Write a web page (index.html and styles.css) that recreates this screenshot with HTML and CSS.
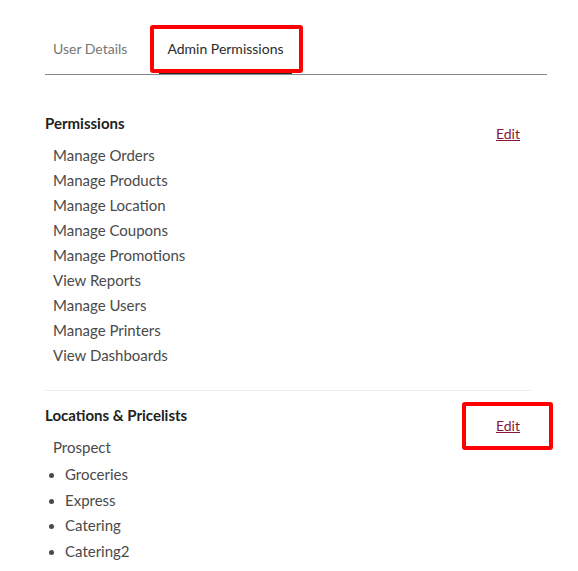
FILE: index.html
```html
<!DOCTYPE html>
<html lang="en">
<head>
  <meta charset="UTF-8" />
  <meta name="viewport" content="width=device-width, initial-scale=1.0"/>
  <title>Admin Permissions</title>
  <link rel="stylesheet" href="styles.css">
</head>
<body>

  <div class="page">
    <div class="tabs">
      <div class="tab">User Details</div>
      <div class="tab tab-active">
        <span class="mark mark-tab"></span>
        Admin Permissions
      </div>
    </div>

    <div class="section">
      <div class="section-body">
        <h3 class="section-title">Permissions</h3>
        <ul class="plain-list">
          <li>Manage Orders</li>
          <li>Manage Products</li>
          <li>Manage Location</li>
          <li>Manage Coupons</li>
          <li>Manage Promotions</li>
          <li>View Reports</li>
          <li>Manage Users</li>
          <li>Manage Printers</li>
          <li>View Dashboards</li>
        </ul>
      </div>
      <div class="edit-wrap">
        <a href="#" class="edit-link">Edit</a>
      </div>
    </div>

    <div class="section section-last">
      <div class="section-body">
        <h3 class="section-title">Locations &amp; Pricelists</h3>
        <div class="location-name">Prospect</div>
        <ul class="bullet-list">
          <li>Groceries</li>
          <li>Express</li>
          <li>Catering</li>
          <li>Catering2</li>
        </ul>
      </div>
      <div class="edit-wrap">
        <span class="mark mark-edit"></span>
        <a href="#" class="edit-link">Edit</a>
      </div>
    </div>
  </div>

</body>
</html>
```

FILE: styles.css
```css
body {
  margin: 0;
  font-family: Lato, "Open Sans", sans-serif;
  background: #fff;
  color: #333;
}

.page {
  padding: 34px 31px 0 45px;
}

/* tabs */
.tabs {
  display: flex;
  gap: 24px;
  border-bottom: 1px solid #888;
  height: 40px;
}

.tab {
  position: relative;
  padding: 0 8px;
  font-size: 14px;
  line-height: 30px;
  color: #777;
}

.tab-active {
  color: #2b2b2b;
  border-bottom: 3px solid #2b2b2b;
  height: 37px;
}

/* red highlight boxes */
.mark {
  position: absolute;
  border: 4px solid #f00;
  border-radius: 3px;
  pointer-events: none;
}

.mark-tab {
  left: -9px;
  right: -11px;
  top: -9px;
  bottom: -2px;
}

.mark-edit {
  left: -34px;
  right: -33px;
  top: -13px;
  bottom: -14px;
}

/* sections */
.section {
  display: flex;
  justify-content: space-between;
  width: 486px;
  padding: 38px 0 22px;
  border-bottom: 1px solid #ececec;
}

.section-last {
  border-bottom: none;
  padding-top: 14px;
}

.section-title {
  margin: 0 0 10px;
  font-size: 15px;
  font-weight: 700;
  color: #222;
  line-height: 20px;
}

.plain-list,
.bullet-list {
  margin: 0;
  font-size: 15px;
  line-height: 25px;
  color: #4a4a4a;
}

.plain-list {
  list-style: none;
  padding: 0 0 0 8px;
}

.location-name {
  padding-left: 8px;
  font-size: 15px;
  line-height: 25px;
  color: #4a4a4a;
  margin-bottom: 2px;
}

.bullet-list {
  padding-left: 20px;
  line-height: 25.5px;
}

.bullet-list li::marker {
  font-size: 14px;
}

.edit-wrap {
  position: relative;
  align-self: flex-start;
  margin: 10px 11px 0 0;
}

.edit-link {
  font-size: 14px;
  color: #8a1538;
  text-decoration: underline;
  line-height: 20px;
}
```
